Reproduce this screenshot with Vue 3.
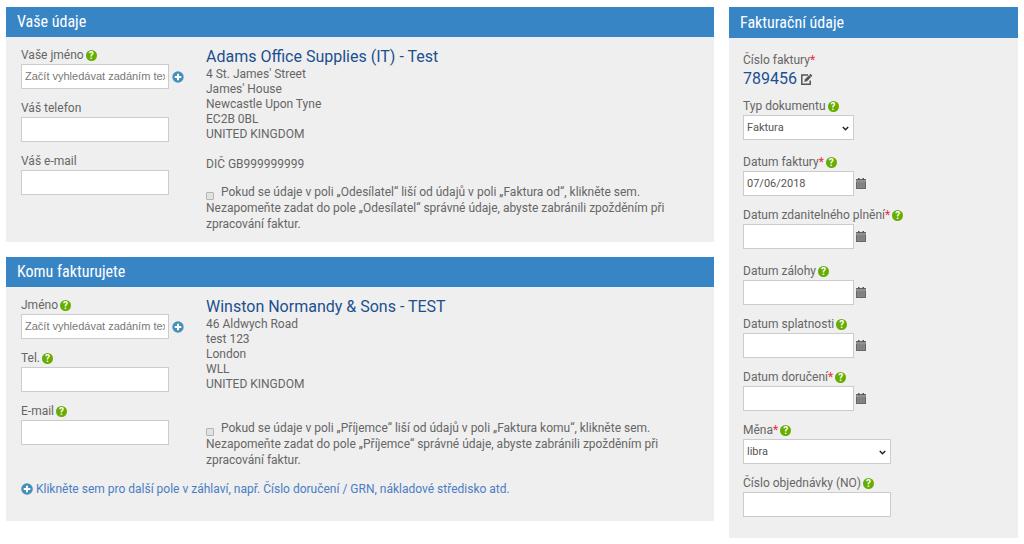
<template>
  <div class="invoice-page">
    <div class="main-column">
      <section v-for="party in parties" :key="party.id" class="panel">
        <h2 class="panel-title">{{ party.title }}</h2>
        <div class="panel-body">
          <div class="party">
            <div class="party-fields">
              <div v-for="field in party.fields" :key="field.id" class="field">
                <div class="field-label">
                  <label :for="field.id">{{ field.label }}</label>
                  <button v-if="field.help" class="help" type="button">?</button>
                </div>
                <div class="field-row">
                  <input
                    :id="field.id"
                    v-model="field.value"
                    class="control"
                    type="text"
                    :placeholder="field.placeholder"
                  />
                  <button v-if="field.placeholder" class="icon-btn add-btn" type="button" aria-label="+">
                    <svg width="12" height="12" viewBox="0 0 12 12">
                      <circle cx="6" cy="6" r="5.7" fill="#4590bb" />
                      <path d="M6 2.700v6.600M2.700 6h6.600" stroke="#fff" stroke-width="2" />
                    </svg>
                  </button>
                </div>
              </div>
            </div>
            <div class="party-details">
              <h3 class="party-name">{{ party.name }}</h3>
              <address class="address">
                <div v-for="line in party.address" :key="line">{{ line }}</div>
              </address>
              <p v-if="party.taxId" class="tax-id">{{ party.taxId }}</p>
              <label class="differs" :class="{ 'no-tax': !party.taxId }">
                <input v-model="party.differs" class="differs-box" type="checkbox" />{{ party.note }}
              </label>
            </div>
          </div>
          <a v-if="party.moreLink" class="more-link" href="#">
            <svg width="12" height="12" viewBox="0 0 12 12">
              <circle cx="6" cy="6" r="5.800" fill="#4590bb" />
              <path d="M6 2.700v6.600M2.700 6h6.600" stroke="#fff" stroke-width="2" />
            </svg>
            <span>{{ party.moreLink }}</span>
          </a>
        </div>
      </section>
    </div>

    <section class="panel invoice">
      <h2 class="panel-title invoice-title">Fakturační údaje</h2>
      <div class="panel-body invoice-body">
        <div class="invoice-number">
          <div class="field-label">Číslo faktury<span class="required">*</span></div>
          <div class="number-row">
            <span class="number">789456</span>
            <button class="icon-btn" type="button" aria-label="Číslo faktury">
              <svg width="13" height="13" viewBox="0 0 13 13" fill="none">
                <path d="M8 2H1.800v9.200h8.400V7.500" stroke="#555" stroke-width="1.500" />
                <path d="M4.300 8.900l.7-2.700L10.400.8l2 2L7 8.200z" fill="#555" />
                <path d="M9 2.300l2 2" stroke="#efefef" stroke-width=".6" />
              </svg>
            </button>
          </div>
        </div>
        <div
          v-for="field in invoiceFields"
          :key="field.id"
          class="field"
          :class="{ spaced: field.spaced }"
        >
          <div class="field-label">
            <label :for="field.id">{{ field.label }}<span v-if="field.required" class="required">*</span></label>
            <button class="help" type="button">?</button>
          </div>
          <div class="field-row">
            <div v-if="field.options" class="select-wrap">
              <select
                :id="field.id"
                v-model="field.value"
                class="control"
                :class="{ short: field.short }"
              >
                <option v-for="option in field.options" :key="option">{{ option }}</option>
              </select>
              <svg class="select-arrow" width="7" height="5" viewBox="0 0 7 5" fill="none">
                <path d="M.8 1l2.700 2.700L6.200 1" stroke="#222" stroke-width="1.500" />
              </svg>
            </div>
            <input
              v-else
              :id="field.id"
              v-model="field.value"
              class="control"
              :class="{ short: field.short }"
              type="text"
            />
            <button v-if="field.date" class="icon-btn date-btn" type="button" :aria-label="field.label">
              <svg width="10" height="11" viewBox="0 0 10 11">
                <path d="M0 1h10v10H0z" fill="#666" />
                <path d="M2 0h1.500v2H2zM6.500 0H8v2H6.500z" fill="#555" />
                <path d="M0 3h10" stroke="#ddd" stroke-width=".7" />
                <path d="M1 4h8v6H1z" fill="#888" />
                <path d="M1 6h8M1 8h8M3.500 4v6M6.500 4v6" stroke="#777" stroke-width=".5" />
              </svg>
            </button>
          </div>
        </div>
      </div>
    </section>
  </div>
</template>

<script setup>
import { ref } from 'vue';

const searchHint = 'Začít vyhledávat zadáním textu';

const parties = ref([
  {
    id: 'sender',
    title: 'Vaše údaje',
    fields: [
      { id: 'sender-name', label: 'Vaše jméno', help: true, placeholder: searchHint, value: '' },
      { id: 'sender-phone', label: 'Váš telefon', value: '' },
      { id: 'sender-email', label: 'Váš e-mail', value: '' },
    ],
    name: 'Adams Office Supplies (IT) - Test',
    address: ["4 St. James' Street", "James' House", 'Newcastle Upon Tyne', 'EC2B 0BL', 'UNITED KINGDOM'],
    taxId: 'DIČ GB999999999',
    differs: false,
    note: 'Pokud se údaje v poli „Odesílatel“ liší od údajů v poli „Faktura od“, klikněte sem. Nezapomeňte zadat do pole „Odesílatel“ správné údaje, abyste zabránili zpožděním při zpracování faktur.',
  },
  {
    id: 'recipient',
    title: 'Komu fakturujete',
    fields: [
      { id: 'recipient-name', label: 'Jméno', help: true, placeholder: searchHint, value: '' },
      { id: 'recipient-phone', label: 'Tel.', help: true, value: '' },
      { id: 'recipient-email', label: 'E-mail', help: true, value: '' },
    ],
    name: 'Winston Normandy & Sons - TEST',
    address: ['46 Aldwych Road', 'test 123', 'London', 'WLL', 'UNITED KINGDOM'],
    taxId: '',
    differs: false,
    note: 'Pokud se údaje v poli „Příjemce“ liší od údajů v poli „Faktura komu“, klikněte sem. Nezapomeňte zadat do pole „Příjemce“ správné údaje, abyste zabránili zpožděním při zpracování faktur.',
    moreLink: 'Klikněte sem pro další pole v záhlaví, např. Číslo doručení / GRN, nákladové středisko atd.',
  },
]);

const invoiceFields = ref([
  { id: 'doc-type', label: 'Typ dokumentu', options: ['Faktura'], value: 'Faktura', short: true, spaced: true },
  { id: 'invoice-date', label: 'Datum faktury', required: true, date: true, value: '07/06/2018', short: true },
  { id: 'tax-date', label: 'Datum zdanitelného plnění', required: true, date: true, value: '', short: true, spaced: true },
  { id: 'deposit-date', label: 'Datum zálohy', date: true, value: '', short: true },
  { id: 'due-date', label: 'Datum splatnosti', date: true, value: '', short: true },
  { id: 'delivery-date', label: 'Datum doručení', required: true, date: true, value: '', short: true },
  { id: 'currency', label: 'Měna', required: true, options: ['libra'], value: 'libra' },
  { id: 'order-number', label: 'Číslo objednávky (NO)', value: '' },
]);
</script>

<style>
body {
  margin: 0;
  background: #fff;
}
</style>

<style scoped>
.invoice-page {
  display: grid;
  grid-template-columns: 708fr 289fr;
  gap: 15px;
  align-items: start;
  padding: 7px 6px 6px;
  font-family: Roboto, "Liberation Sans", sans-serif;
  font-size: 12px;
  line-height: 16px;
  color: #666;
}

.main-column {
  display: flex;
  flex-direction: column;
  gap: 15px;
}

.panel {
  background: #efefef;
}

.panel-title {
  margin: 0;
  padding: 0 11px;
  background: #3885c6;
  color: #fff;
  font-family: "Roboto Condensed", "Liberation Sans Narrow", Roboto, sans-serif;
  font-size: 16px;
  font-weight: 400;
  line-height: 30px;
}

.panel-body {
  padding: 10px 15px;
}

.party {
  display: grid;
  grid-template-columns: 165px 1fr;
  gap: 20px;
  padding-right: 25px;
}

.field {
  margin-bottom: 11px;
}

.field.spaced {
  margin-bottom: 14px;
}

.field-label {
  display: flex;
  align-items: center;
  gap: 2px;
  height: 16px;
  margin-bottom: 1px;
}

.field-row {
  display: flex;
  align-items: center;
}

.control {
  box-sizing: border-box;
  width: 148px;
  height: 25px;
  padding: 0 3px;
  border: 1px solid #ccc;
  border-radius: 0;
  background: #fff;
  color: #555;
  font-family: inherit;
  font-size: 11px;
}

.select-wrap {
  position: relative;
}

select.control {
  display: block;
  appearance: none;
}

.select-arrow {
  position: absolute;
  top: 11px;
  right: 5px;
  pointer-events: none;
}

.control.short {
  width: 111px;
}

.control::placeholder {
  color: #777;
  font-family: "Liberation Sans", Arial, sans-serif;
}

.help {
  width: 11px;
  height: 11px;
  padding: 0;
  border: 0;
  border-radius: 50%;
  background: #66ad00;
  color: #fff;
  font-family: inherit;
  font-size: 10px;
  font-weight: 700;
  line-height: 11px;
  text-align: center;
}

.icon-btn {
  display: flex;
  padding: 0;
  border: 0;
  background: none;
}

.add-btn {
  margin-left: 3px;
}

.date-btn {
  margin-left: 2px;
}

.party-name {
  margin: 0;
  color: #1c4f8f;
  font-size: 16px;
  font-weight: 400;
  line-height: 20px;
}

.address {
  font-style: normal;
  line-height: 15px;
}

.tax-id {
  margin: 15px 0 0;
  line-height: 15px;
}

.differs {
  display: block;
  margin-top: 12px;
}

.differs.no-tax {
  margin-top: 28px;
}

.differs-box {
  appearance: none;
  box-sizing: border-box;
  width: 8px;
  height: 8px;
  margin: 0 7px 0 0;
  border: 1px solid #b5b5b5;
  border-radius: 1px;
  background: #e2e2e2;
  vertical-align: -4px;
}

.more-link {
  display: flex;
  align-items: center;
  gap: 3px;
  padding: 13px 0 14px;
  color: #4a7dc4;
  text-decoration: none;
}

.invoice-title {
  line-height: 31px;
}

.invoice-body {
  padding: 14px 14px 10px;
}

.invoice-number {
  margin-bottom: 9px;
}

.required {
  color: #f0283c;
}

.invoice-number .field-label {
  gap: 0;
}

.number-row {
  display: flex;
  align-items: center;
  gap: 3px;
}

.number {
  color: #1c4f8f;
  font-size: 16px;
  line-height: 20px;
}
</style>
